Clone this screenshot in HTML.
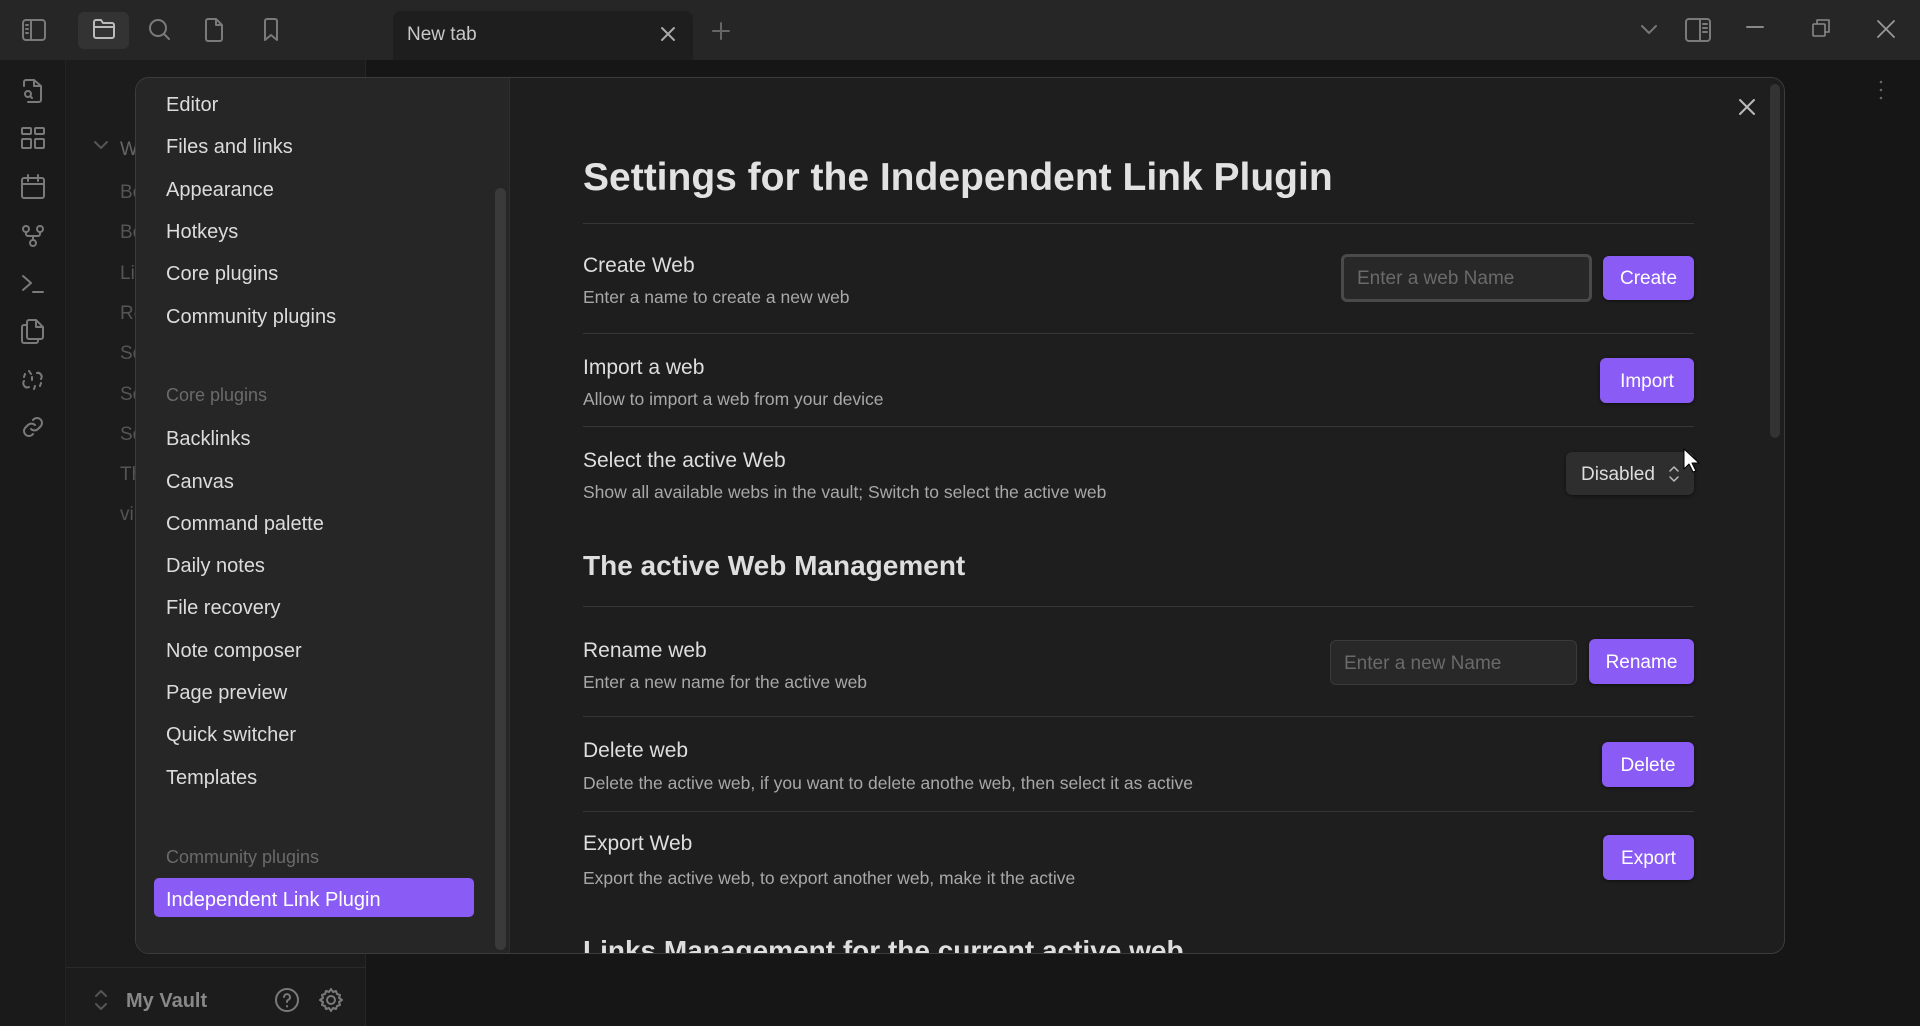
<!DOCTYPE html>
<html><head><meta charset="utf-8"><style>
*{box-sizing:border-box;margin:0;padding:0}
body{width:1920px;height:1026px;overflow:hidden;background:#161616;font-family:"Liberation Sans",sans-serif;position:relative;color:#dadada}
.a{position:absolute;white-space:nowrap}
svg{position:absolute;fill:none;stroke:#7a7a7a;stroke-width:2;stroke-linecap:round;stroke-linejoin:round}
.it{position:absolute;left:166px;font-size:20px;color:#dcdcdc;line-height:24px;transform:translateY(2px)}
.hd{position:absolute;left:166px;font-size:18px;color:#6a6a6a;line-height:24px;transform:translateY(2px)}
.t{position:absolute;left:583px;font-size:21px;color:#dedede;line-height:26px;transform:translateY(2px)}
.d{position:absolute;left:583px;font-size:17.5px;color:#a8a8a8;line-height:22px;transform:translateY(2px)}
.ln{position:absolute;left:583px;width:1111px;height:1px;background:#363636}
.btn{position:absolute;background:#8a5cf5;color:#fff;border-radius:6px;font-size:19px;text-align:center;box-shadow:0 1px 3px rgba(0,0,0,.5)}
.inp{position:absolute;background:#282828;border:1px solid #3a3a3a;border-radius:6px;color:#6a6a6a;font-size:19px;padding-left:13px}
.sh{transform:translateY(2px)}
</style></head><body>
<div class="a" style="left:0;top:0;width:1920px;height:60px;background:#262626"></div>
<div class="a" style="left:78px;top:12px;width:51px;height:37px;background:#333;border-radius:6px"></div>
<svg style="left:21px;top:18px" width="26" height="24"><rect x="2" y="2" width="22" height="20" rx="3"/><path d="M10 2v20M5 7h2M5 11h2M5 15h2"/></svg>
<svg style="left:91px;top:17px" width="26" height="24"><path d="M3 5a2 2 0 0 1 2-2h5l2 3h9a2 2 0 0 1 2 2v11a2 2 0 0 1-2 2H5a2 2 0 0 1-2-2z M3 10h20" stroke="#bbb"/></svg>
<svg style="left:147px;top:17px" width="26" height="26"><circle cx="11" cy="11" r="8"/><path d="M17 17l5 5"/></svg>
<svg style="left:203px;top:17px" width="22" height="26"><path d="M13 2H5a2 2 0 0 0-2 2v18a2 2 0 0 0 2 2h12a2 2 0 0 0 2-2V8z M13 2v6h6"/></svg>
<svg style="left:261px;top:17px" width="20" height="26"><path d="M16 23l-6-5-6 5V4a2 2 0 0 1 2-2h8a2 2 0 0 1 2 2z"/></svg>
<div class="a" style="left:393px;top:11px;width:300px;height:49px;background:#1e1e1e;border-radius:8px 8px 0 0"></div>
<div class="a sh" style="left:407px;top:22px;font-size:19px;color:#c8c8c8">New tab</div>
<svg style="left:659px;top:25px" width="18" height="18"><path d="M3 3l12 12M15 3L3 15" stroke="#aaa"/></svg>
<svg style="left:711px;top:21px" width="20" height="20"><path d="M10 2v16M2 10h16" stroke="#666"/></svg>
<svg style="left:1640px;top:24px" width="18" height="12"><path d="M2 2l7 7 7-7" stroke="#777"/></svg>
<svg style="left:1684px;top:17px" width="28" height="26"><rect x="2" y="2" width="24" height="22" rx="3"/><path d="M16 2v22M19 7h4M19 11h4M19 15h4"/></svg>
<svg style="left:1745px;top:22px" width="20" height="10"><path d="M2 5h16" stroke="#888"/></svg>
<svg style="left:1811px;top:18px" width="20" height="20"><rect x="2" y="6" width="12" height="12" rx="1" stroke="#888" stroke-width="1.6"/><path d="M6 6V2h12v12h-4" stroke="#888" stroke-width="1.6"/></svg>
<svg style="left:1876px;top:19px" width="20" height="20"><path d="M2 2l16 16M18 2L2 18" stroke="#999" stroke-width="1.8"/></svg>
<div class="a" style="left:0;top:60px;width:66px;height:966px;background:#1a1a1a;border-right:1px solid #232323"></div>
<div class="a" style="left:66px;top:60px;width:300px;height:966px;background:#1c1c1c;border-right:1px solid #262626"></div>
<div class="a" style="left:66px;top:967px;width:300px;height:1px;background:#2a2a2a"></div>
<svg style="left:20px;top:78px" width="26" height="28"><path d="M14 2H6a2 2 0 0 0-2 2v4 M14 2l7 6v14a2 2 0 0 1-2 2H8 M14 2v6h7"/><circle cx="8" cy="16" r="3"/><path d="M10 18l2 2"/></svg>
<svg style="left:20px;top:126px" width="26" height="26"><rect x="2" y="2" width="9" height="6" rx="1"/><rect x="15" y="2" width="9" height="6" rx="1"/><rect x="2" y="13" width="9" height="9" rx="1"/><rect x="15" y="13" width="9" height="9" rx="1"/></svg>
<svg style="left:20px;top:174px" width="26" height="26"><rect x="2" y="4" width="22" height="20" rx="2"/><path d="M2 10h22M8 1v6M18 1v6"/></svg>
<svg style="left:20px;top:223px" width="26" height="26"><circle cx="6" cy="6" r="3"/><circle cx="20" cy="6" r="3"/><circle cx="13" cy="20" r="3"/><path d="M6 9v2a2 2 0 0 0 2 2h10a2 2 0 0 0 2-2V9M13 13v4"/></svg>
<svg style="left:20px;top:272px" width="26" height="24"><path d="M3 4l8 7-8 7M13 20h10"/></svg>
<svg style="left:20px;top:318px" width="26" height="28"><path d="M16 2H9a2 2 0 0 0-2 2v15a2 2 0 0 0 2 2h12a2 2 0 0 0 2-2V9z M16 2v7h7 M7 7H4a2 2 0 0 0-2 2v14a2 2 0 0 0 2 2h12a2 2 0 0 0 2-2v-2"/></svg>
<svg style="left:20px;top:367px" width="26" height="26"><path d="M9 4l2 3M5 7l-1 3M4 14c-2 3 1 8 5 6 M17 6c3-1 6 3 4 6 M14 22l1-3M20 19l1-3M12 10v3"/></svg>
<svg style="left:20px;top:414px" width="26" height="26"><path d="M11 15a5 5 0 0 0 7 0l3-3a5 5 0 0 0-7-7l-1 1 M15 11a5 5 0 0 0-7 0l-3 3a5 5 0 0 0 7 7l1-1"/></svg>
<div class="a sh" style="left:120px;top:137px;font-size:19px;color:#666">W</div>
<svg style="left:93px;top:140px" width="16" height="12"><path d="M2 2l6 6 6-6" stroke="#555"/></svg>
<div class="a sh" style="left:120px;top:180px;font-size:19px;color:#555">Bo</div>
<div class="a sh" style="left:120px;top:220px;font-size:19px;color:#555">Bo</div>
<div class="a sh" style="left:120px;top:261px;font-size:19px;color:#555">Li</div>
<div class="a sh" style="left:120px;top:301px;font-size:19px;color:#555">Re</div>
<div class="a sh" style="left:120px;top:341px;font-size:19px;color:#555">So</div>
<div class="a sh" style="left:120px;top:382px;font-size:19px;color:#555">So</div>
<div class="a sh" style="left:120px;top:422px;font-size:19px;color:#555">So</div>
<div class="a sh" style="left:120px;top:462px;font-size:19px;color:#555">Th</div>
<div class="a sh" style="left:120px;top:502px;font-size:19px;color:#555">vi</div>
<svg style="left:94px;top:988px" width="14" height="24"><path d="M2 8l5-5 5 5M2 16l5 5 5-5" stroke="#555"/></svg>
<div class="a sh" style="left:126px;top:988px;font-size:20px;color:#888;font-weight:bold">My Vault</div>
<svg style="left:274px;top:987px" width="26" height="26"><circle cx="13" cy="13" r="11"/><path d="M10 10a3 3 0 1 1 4 3c-1 .5-1 1-1 2M13 19v.5"/></svg>
<svg style="left:318px;top:987px" width="26" height="26"><circle cx="13" cy="13" r="4"/><path d="M13 2l2 3 3-1 1 3 3 1-1 3 3 2-3 2 1 3-3 1-1 3-3-1-2 3-2-3-3 1-1-3-3-1 1-3-3-2 3-2-1-3 3-1 1-3 3 1z"/></svg>
<svg style="left:1875px;top:78px" width="12" height="24"><circle cx="6" cy="4" r="1.3" fill="#666" stroke="none"/><circle cx="6" cy="12" r="1.3" fill="#666" stroke="none"/><circle cx="6" cy="20" r="1.3" fill="#666" stroke="none"/></svg>
<div class="a" style="left:135px;top:77px;width:1650px;height:877px;background:#1e1e1e;border:1px solid #3c3c3c;border-radius:14px;overflow:hidden">
<div class="a" style="left:0;top:0;width:374px;height:877px;background:#262626;border-right:1px solid #2e2e2e"></div>
<div class="a" style="left:359px;top:110px;width:11px;height:762px;background:#3a3a3a;border-radius:6px"></div>
<div class="a" style="left:1634px;top:6px;width:10px;height:354px;background:#333;border-radius:6px"></div>
</div>
<div class="it" style="top:91px">Editor</div>
<div class="it" style="top:133px">Files and links</div>
<div class="it" style="top:176px">Appearance</div>
<div class="it" style="top:218px">Hotkeys</div>
<div class="it" style="top:260px">Core plugins</div>
<div class="it" style="top:303px">Community plugins</div>
<div class="hd" style="top:381px">Core plugins</div>
<div class="it" style="top:425px">Backlinks</div>
<div class="it" style="top:468px">Canvas</div>
<div class="it" style="top:510px">Command palette</div>
<div class="it" style="top:552px">Daily notes</div>
<div class="it" style="top:594px">File recovery</div>
<div class="it" style="top:637px">Note composer</div>
<div class="it" style="top:679px">Page preview</div>
<div class="it" style="top:721px">Quick switcher</div>
<div class="it" style="top:764px">Templates</div>
<div class="hd" style="top:843px">Community plugins</div>
<div class="a" style="left:154px;top:878px;width:320px;height:39px;background:#8a5cf5;border-radius:5px"></div>
<div class="it" style="top:886px;color:#fff">Independent Link Plugin</div>
<svg style="left:1738px;top:98px" width="18" height="18"><path d="M2 2l14 14M16 2L2 16" stroke="#bbb"/></svg>
<div class="a sh" style="left:583px;top:154px;font-size:39px;font-weight:bold;color:#e2e2e2">Settings for the Independent Link Plugin</div>
<div class="ln" style="top:223px"></div>
<div class="t" style="top:251px">Create Web</div>
<div class="d" style="top:284px">Enter a name to create a new web</div>
<div class="inp" style="left:1341px;top:254px;width:251px;height:48px;border:3px solid #4a4a4a;line-height:44px">Enter a web Name</div>
<div class="btn" style="left:1603px;top:256px;width:91px;height:44px;line-height:46px">Create</div>
<div class="ln" style="top:333px"></div>
<div class="t" style="top:353px">Import a web</div>
<div class="d" style="top:386px">Allow to import a web from your device</div>
<div class="btn" style="left:1600px;top:358px;width:94px;height:45px;line-height:47px">Import</div>
<div class="ln" style="top:426px"></div>
<div class="t" style="top:446px">Select the active Web</div>
<div class="d" style="top:479px">Show all available webs in the vault; Switch to select the active web</div>
<div class="a" style="left:1566px;top:452px;width:128px;height:43px;background:#2e2e2e;border-radius:6px;box-shadow:0 1px 3px rgba(0,0,0,.5);font-size:19px;color:#ddd;line-height:45px;padding-left:15px">Disabled</div>
<svg style="left:1668px;top:464px" width="12" height="20"><path d="M2 7l4-4 4 4M2 13l4 4 4-4" stroke="#bbb" stroke-width="1.5"/></svg>
<svg style="left:1682px;top:447px;stroke:#000;fill:#fff;stroke-width:1" width="18" height="28"><path d="M2 2v20l5-5 4 8 3-1-4-8h7z"/></svg>
<div class="a sh" style="left:583px;top:548px;font-size:28px;font-weight:bold;color:#dedede">The active Web Management</div>
<div class="ln" style="top:606px"></div>
<div class="t" style="top:636px">Rename web</div>
<div class="d" style="top:669px">Enter a new name for the active web</div>
<div class="inp" style="left:1330px;top:640px;width:247px;height:45px;line-height:45px">Enter a new Name</div>
<div class="btn" style="left:1589px;top:639px;width:105px;height:45px;line-height:47px">Rename</div>
<div class="ln" style="top:716px"></div>
<div class="t" style="top:736px">Delete web</div>
<div class="d" style="top:770px">Delete the active web, if you want to delete anothe web, then select it as active</div>
<div class="btn" style="left:1602px;top:742px;width:92px;height:45px;line-height:47px">Delete</div>
<div class="ln" style="top:811px"></div>
<div class="t" style="top:829px">Export Web</div>
<div class="d" style="top:865px">Export the active web, to export another web, make it the active</div>
<div class="btn" style="left:1603px;top:835px;width:91px;height:45px;line-height:47px">Export</div>
<div class="a" style="left:583px;top:930px;width:1180px;height:23px;overflow:hidden"><div style="font-size:28px;font-weight:bold;color:#dedede;margin-top:5px">Links Management for the current active web</div></div>
</body></html>
